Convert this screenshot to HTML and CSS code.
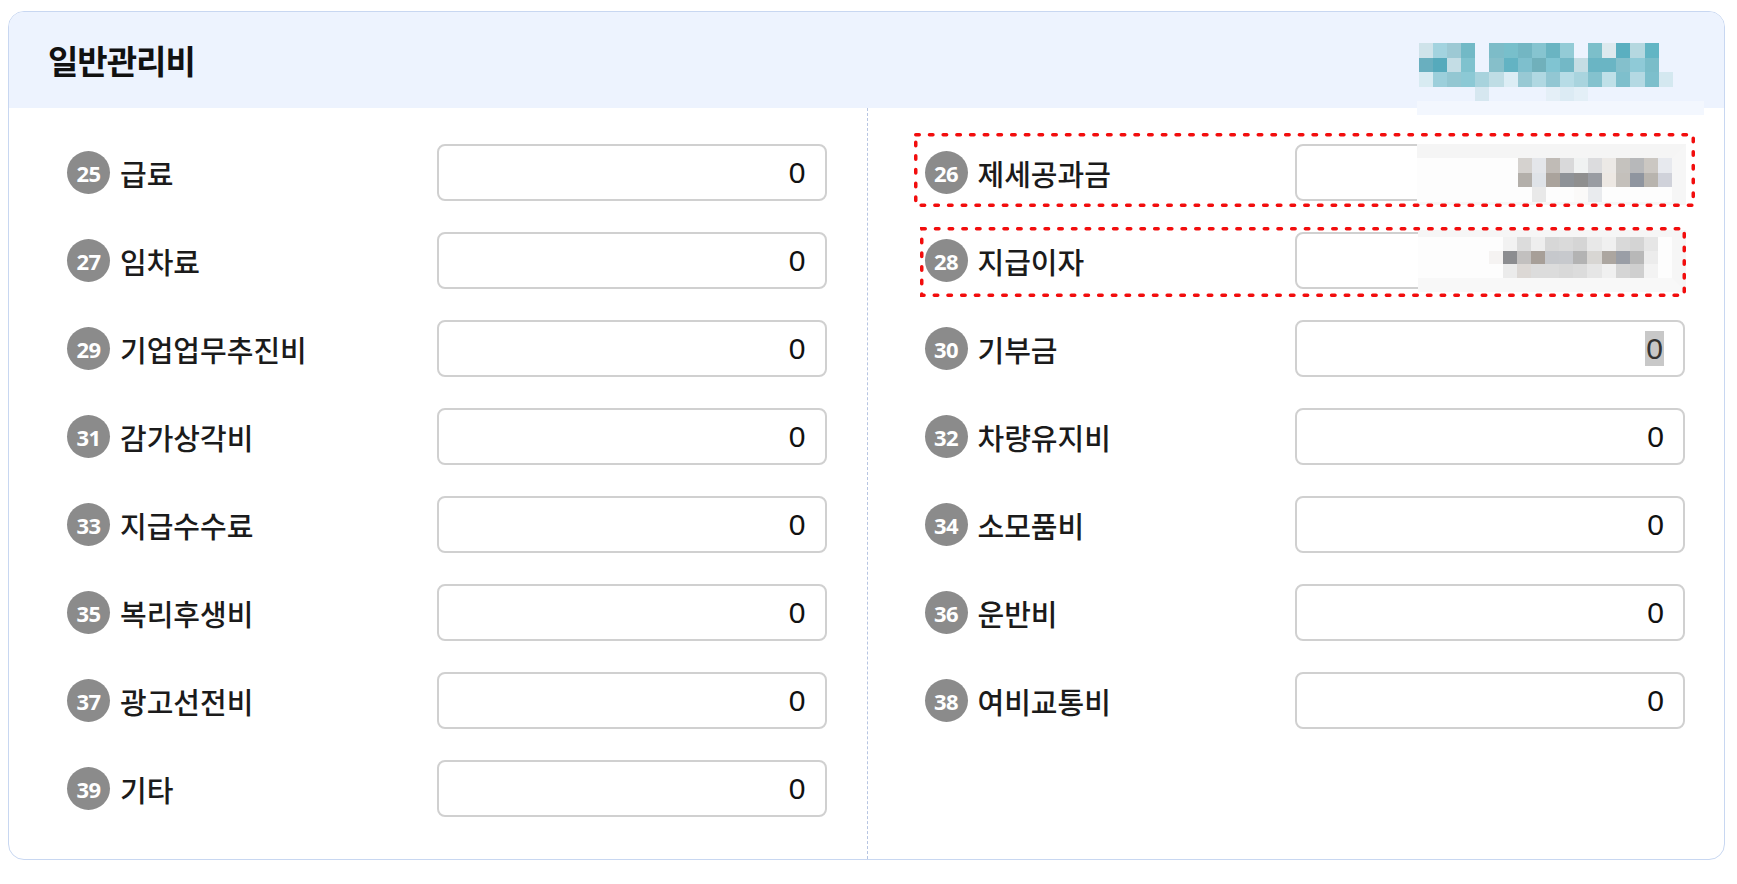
FILE: index.html
```html
<!DOCTYPE html>
<html lang="ko">
<head>
    <meta charset="UTF-8">
    <meta name="viewport" content="width=device-width, initial-scale=1.0">
    <title>일반관리비</title>
    <link rel="stylesheet" href="styles.css">
</head>
<body>
    <section class="card">
        <div class="card-head">
            <h2>일반관리비</h2>
        </div>

        <div class="card-body">
            <div class="col">
                <div class="row"><span class="num">25</span><span class="label">급료</span><div class="amount">0</div></div>
                <div class="row"><span class="num">27</span><span class="label">임차료</span><div class="amount">0</div></div>
                <div class="row"><span class="num">29</span><span class="label">기업업무추진비</span><div class="amount">0</div></div>
                <div class="row"><span class="num">31</span><span class="label">감가상각비</span><div class="amount">0</div></div>
                <div class="row"><span class="num">33</span><span class="label">지급수수료</span><div class="amount">0</div></div>
                <div class="row"><span class="num">35</span><span class="label">복리후생비</span><div class="amount">0</div></div>
                <div class="row"><span class="num">37</span><span class="label">광고선전비</span><div class="amount">0</div></div>
                <div class="row"><span class="num">39</span><span class="label">기타</span><div class="amount">0</div></div>
            </div>
            <div class="col">
                <div class="row"><span class="num">26</span><span class="label">제세공과금</span><div class="amount"></div></div>
                <div class="row"><span class="num">28</span><span class="label">지급이자</span><div class="amount"></div></div>
                <div class="row"><span class="num">30</span><span class="label">기부금</span><div class="amount"><span class="picked">0</span></div></div>
                <div class="row"><span class="num">32</span><span class="label">차량유지비</span><div class="amount">0</div></div>
                <div class="row"><span class="num">34</span><span class="label">소모품비</span><div class="amount">0</div></div>
                <div class="row"><span class="num">36</span><span class="label">운반비</span><div class="amount">0</div></div>
                <div class="row"><span class="num">38</span><span class="label">여비교통비</span><div class="amount">0</div></div>
            </div>
        </div>

        <!-- redacted areas -->
        <div class="mask mask-head">
            <div class="pix pix-head">
                <i style="background:#cfe3ea"></i><i style="background:#a3d3df"></i><i style="background:#9dc9d4"></i><i style="background:#72b9c6"></i><i></i><i style="background:#7dbcc8"></i><i style="background:#78bfcb"></i><i style="background:#73b6c3"></i><i style="background:#86c4d0"></i><i style="background:#6ab4c2"></i><i style="background:#93cbd6"></i><i></i><i style="background:#7cbfca"></i><i style="background:#dde9ee"></i><i style="background:#5aafc0"></i><i style="background:#b5d8e0"></i><i style="background:#62b5c4"></i><i></i>
                <i style="background:#69afbf"></i><i style="background:#56aabc"></i><i style="background:#c4dde5"></i><i style="background:#7fc2ce"></i><i></i><i style="background:#86bfca"></i><i style="background:#63b3c3"></i><i style="background:#7ebfcd"></i><i style="background:#70b0bb"></i><i style="background:#80c4d2"></i><i style="background:#73b8c6"></i><i style="background:#c5dde4"></i><i style="background:#6ab5c4"></i><i style="background:#6ab5c4"></i><i style="background:#84c0cc"></i><i style="background:#8fcad7"></i><i style="background:#7abdc9"></i><i></i>
                <i style="background:#d8ebf2"></i><i style="background:#9ccfdb"></i><i style="background:#93c7d2"></i><i style="background:#8cc9d5"></i><i style="background:#a8d3dd"></i><i style="background:#bfdde5"></i><i style="background:#dcedf5"></i><i style="background:#98c9d4"></i><i style="background:#b0d8e2"></i><i style="background:#92c7d3"></i><i style="background:#b7dce6"></i><i style="background:#a9d4de"></i><i style="background:#84c2ce"></i><i style="background:#bfe0e8"></i><i style="background:#7ebfcc"></i><i style="background:#b4d9e3"></i><i style="background:#7cbfcc"></i><i style="background:#d4e8f0"></i>
                <i></i><i></i><i></i><i></i><i style="background:#d6e7f0"></i><i></i><i></i><i></i><i></i><i style="background:#e4eff7"></i><i style="background:#dcebf4"></i><i style="background:#e3eff7"></i><i></i><i></i><i></i><i></i><i></i><i></i>
            </div>
        </div>

        <div class="mask mask-26">
            <div class="pix pix-26">
                <i style="background:#d5d2cf"></i><i style="background:#e4e6ea"></i><i style="background:#c0bbb6"></i><i style="background:#d9d9da"></i><i style="background:#f0f2f2"></i><i style="background:#dcdcde"></i><i style="background:#ece9e6"></i><i style="background:#c5c2be"></i><i style="background:#b7b8ba"></i><i style="background:#cbc7c2"></i><i style="background:#e7e9ee"></i>
                <i style="background:#b3afaa"></i><i style="background:#dfe3e8"></i><i style="background:#aaa39c"></i><i style="background:#8e9297"></i><i style="background:#8f8f8f"></i><i style="background:#999ca2"></i><i style="background:#ede8e3"></i><i style="background:#c4c0bb"></i><i style="background:#8f959f"></i><i style="background:#b8b4ae"></i><i style="background:#d0d2da"></i>
                <i></i><i style="background:#e9e9e9"></i><i></i><i></i><i style="background:#fbfaf9"></i><i style="background:#e9ebee"></i><i></i><i></i><i></i><i></i><i></i>
            </div>
        </div>

        <div class="mask mask-28">
            <div class="pix pix-28">
                <i></i><i style="background:#f2f2f2"></i><i style="background:#dcdcdc"></i><i style="background:#eeeeee"></i><i style="background:#d7d7d7"></i><i style="background:#dadada"></i><i style="background:#d5d5d5"></i><i style="background:#e8e8e8"></i><i style="background:#f0f0f0"></i><i style="background:#d9d9d9"></i><i style="background:#d4d4d4"></i><i style="background:#e6e6e6"></i><i></i>
                <i style="background:#f5f3f2"></i><i style="background:#8c8d90"></i><i style="background:#c2c0bf"></i><i style="background:#a79f98"></i><i style="background:#c6c8cc"></i><i style="background:#c7c9cd"></i><i style="background:#b3b3b3"></i><i style="background:#d8d6d3"></i><i style="background:#aca6a0"></i><i style="background:#9a9ea6"></i><i style="background:#b8b8b8"></i><i style="background:#ececec"></i><i></i>
                <i></i><i style="background:#ebebeb"></i><i style="background:#dcd8d5"></i><i style="background:#dcdcdc"></i><i style="background:#dcdcdc"></i><i style="background:#d9d9d9"></i><i style="background:#dcdcdc"></i><i style="background:#e6e6e6"></i><i style="background:#f0f0f0"></i><i style="background:#d5d5d5"></i><i style="background:#cfcfcf"></i><i style="background:#f3f3f3"></i><i></i>
            </div>
        </div>

        <!-- review marks -->
        <svg class="mark mark-26" width="781" height="74" viewBox="0 0 781 74">
            <rect x="1.75" y="1.75" width="777.5" height="70.5" />
        </svg>
        <svg class="mark mark-28" width="766" height="70" viewBox="0 0 766 70">
            <rect x="1.75" y="1.75" width="762.5" height="66.5" />
        </svg>
    </section>
</body>
</html>
```

FILE: styles.css
```css
body {
    margin: 11px 12px 0 8px;
    font-family: "Noto Sans CJK KR", "Noto Sans", sans-serif;
    background: #fff;
    color: #1b1b1b;
}

.card {
    position: relative;
    border: 1px solid #c8d7f1;
    border-radius: 16px;
    background: #fff;
}
.card-head {
    height: 96px;
    display: flex;
    align-items: center;
    padding-left: 39px;
    background: #edf3fe;
    border-radius: 15px 15px 0 0;
}
.card-head h2 {
    margin: 0;
    font-size: 33px;
    font-weight: 700;
    letter-spacing: -1px;
    color: #111;
}

.card-body {
    display: grid;
    grid-template-columns: 1fr 1fr;
}
.col {
    display: flex;
    flex-direction: column;
    gap: 31px;
    padding: 36px 40px 42px 58px;
}
.col + .col {
    border-left: 1px dashed #b7c5e2;
    padding-left: 57px;
    padding-right: 39px;
}

.row {
    display: flex;
    align-items: center;
    height: 57px;
}
.num {
    width: 43px;
    height: 43px;
    flex-shrink: 0;
    border-radius: 50%;
    background: #8b8b8b;
    color: #fff;
    display: flex;
    align-items: center;
    justify-content: center;
    font-family: "Noto Sans", sans-serif;
    font-size: 22px;
    font-weight: 700;
    letter-spacing: -0.5px;
}
.label {
    margin-left: 10px;
    font-size: 29px;
    font-weight: 500;
    color: #1b1b1b;
}
.amount {
    margin-left: auto;
    width: 390px;
    height: 57px;
    box-sizing: border-box;
    border: 2px solid #d0d0d0;
    border-radius: 8px;
    display: flex;
    align-items: center;
    justify-content: flex-end;
    padding-right: 19px;
    font-family: "Liberation Sans", Arial, sans-serif;
    font-size: 30px;
    color: #111;
}
.picked {
    display: inline-block;
    line-height: 35px;
    padding: 0 1px;
    background: #c8c8c8;
    color: #333;
}

.mask {
    position: absolute;
    box-sizing: border-box;
}
.pix {
    display: grid;
}
.pix i {
    display: block;
}
.mask-head {
    left: 1408px;
    top: 30px;
    width: 287px;
    height: 73px;
    padding: 1px 0 0 2px;
    background: linear-gradient(#edf3fe 59px, #f3f7fe 59px);
}
.pix-head {
    grid-template-columns: repeat(18, 14.1px);
    grid-auto-rows: 14.5px;
}
.mask-26 {
    left: 1408px;
    top: 132px;
    width: 269px;
    height: 61px;
    display: flex;
    justify-content: flex-end;
    background: #fdfdfd;
    border-top: 14px solid #f5f5f5;
    border-right: 14px solid #f6f6f6;
    border-bottom: 3px solid #f7f7f7;
}
.pix-26 {
    grid-template-columns: repeat(11, 14px);
    grid-auto-rows: 14.7px;
}
.mask-28 {
    left: 1409px;
    top: 218px;
    width: 268px;
    height: 62px;
    display: flex;
    justify-content: flex-end;
    background: #fdfdfd;
    border-top: 7px solid #f6f6f6;
    border-right: 14px solid #f6f6f6;
    border-bottom: 14px solid #f8f8f8;
}
.pix-28 {
    grid-template-columns: repeat(13, 14.1px);
    grid-auto-rows: 13.7px;
}

.mark {
    position: absolute;
    overflow: visible;
}
.mark rect {
    fill: none;
    stroke: #f20d0d;
    stroke-width: 3.5;
    stroke-dasharray: 3.5 10.2;
    stroke-linecap: round;
}
.mark-26 {
    left: 905px;
    top: 121px;
}
.mark-28 {
    left: 911px;
    top: 215px;
}
```
